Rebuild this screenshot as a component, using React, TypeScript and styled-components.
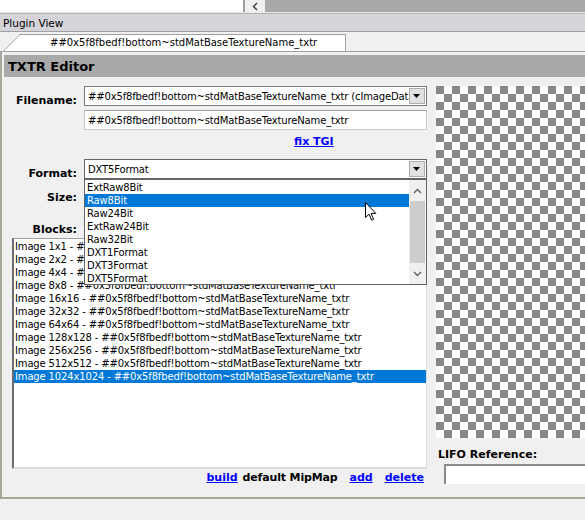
import * as React from 'react';
import styled, {createGlobalStyle} from "styled-components";

const GlobalStyle = createGlobalStyle`
  html, body {
    margin: 0;
    padding: 0;
    background: #f0f0f0;
  }
  body {
    font-family: "DejaVu Sans", Verdana, sans-serif;
    font-size: 10px;
    color: #000;
  }
`

const Window = styled.div`
  width: 585px;
  height: 520px;
  overflow: hidden;
  display: flex;
  flex-direction: column;
  background: #f0f0f0;
`

const TopStrip = styled.div`
  display: flex;
  height: 12px;
  border-bottom: 1px solid #e8e8e8;
`

const TopWhite = styled.div`
  width: 243px;
  background: #fff;
  border-right: 2px solid #a0a0a0;
`

const ScrollLeft = styled.div`
  width: 20px;
  display: flex;
  align-items: center;
  justify-content: center;
  background: #f0f0f0;
`

const TopDark = styled.div`
  flex: 1;
  background: #a9a9a9;
`

const PluginBar = styled.div`
  height: 17px;
  display: flex;
  align-items: center;
  padding-left: 3px;
  background: #d4d4da;
  border-top: 1px solid #b4b4b8;
  border-bottom: 1px solid #a0a0a0;
  font-size: 10.5px;
`

const TabStrip = styled.div`
  height: 19px;
  display: flex;
  align-items: flex-end;
  padding-left: 3px;
  border-bottom: 1px solid #a0a0a0;
`

const Tab = styled.div`
  position: relative;
  width: 343px;
  height: 17px;
  display: flex;
  align-items: center;
  padding-left: 47px;
  box-sizing: border-box;

  &::before {
    content: "";
    position: absolute;
    left: 0;
    top: 0;
    bottom: 0;
    width: 30px;
    background: #fff;
    border-left: 1px solid #a0a0a0;
    border-top: 1px solid #a0a0a0;
    transform-origin: bottom left;
    transform: skewX(-45deg);
  }

  &::after {
    content: "";
    position: absolute;
    left: 20px;
    right: 0;
    top: 0;
    bottom: 0;
    background: #fff;
    border-top: 1px solid #a0a0a0;
    border-right: 1px solid #a0a0a0;
  }
`

const TabText = styled.span`
  position: relative;
  z-index: 1;
  white-space: nowrap;
`

const Panel = styled.div`
  height: 445px;
  border-left: 2px solid #aaa69d;
  border-bottom: 2px solid #aaa69d;
  display: flex;
  flex-direction: column;
`

const Header = styled.div`
  margin: 3px 0 0 2px;
  height: 22px;
  display: flex;
  align-items: center;
  padding-left: 4px;
  background: #a9a9a9;
  font-weight: bold;
  font-size: 13px;
`

const Body = styled.div`
  margin-top: 9px;
  display: grid;
  grid-template-columns: 434px 1fr;
  position: relative;
`

const LeftCol = styled.div`
  display: flex;
  flex-direction: column;
`

const FieldRow = styled.div<{ $mt?: number; $h?: number }>`
  display: grid;
  grid-template-columns: 75px 343px;
  column-gap: 7px;
  margin-top: ${p => p.$mt ?? 0}px;
  height: ${p => p.$h ?? 20}px;
  align-items: end;
`

const Label = styled.div`
  text-align: right;
  font-weight: bold;
  font-size: 11px;
  line-height: 13px;
  margin-bottom: -1px;
`

const Select = styled.div<{ $focus?: boolean }>`
  height: 20px;
  box-sizing: border-box;
  border: 1px solid ${p => p.$focus ? '#646464' : '#7a7a7a'};
  box-shadow: inset 0 0 0 1px #fff;
  background: #fff;
  display: flex;
  align-items: center;
`

const SelectText = styled.span`
  flex: 1;
  padding-left: 3px;
  line-height: 15px;
  white-space: nowrap;
  overflow: hidden;
  letter-spacing: -0.15px;
`

const DropButton = styled.div`
  width: 16px;
  height: 16px;
  margin-right: 1px;
  background: #e1e1e1;
  border: 1px solid #adadad;
  box-sizing: border-box;
  display: flex;
  align-items: center;
  justify-content: center;
`

const TextInput = styled.div`
  height: 20px;
  box-sizing: border-box;
  border: 1px solid #c8c8c8;
  border-top-color: #a0a0a0;
  background: #fff;
  display: flex;
  align-items: center;
  padding-left: 3px;
  white-space: nowrap;
  letter-spacing: -0.15px;
`

const LinkLine = styled.div<{ $mt?: number }>`
  margin-top: ${p => p.$mt ?? 0}px;
  display: flex;
  align-items: center;
`

const BlueLink = styled.a`
  color: #0000ff;
  font-weight: bold;
  font-size: 11px;
  text-decoration: underline;
  cursor: pointer;
`

const FixRow = styled(LinkLine)`
  padding-left: 292px;
  height: 14px;
`

const DropList = styled.div`
  position: absolute;
  left: 82px;
  top: 93px;
  width: 343px;
  height: 106px;
  box-sizing: border-box;
  border: 1px solid #646464;
  background: #fff;
  display: flex;
  z-index: 2;
`

const DropItems = styled.div`
  flex: 1;
  padding-top: 1px;
`

const DropItem = styled.div<{ $sel?: boolean }>`
  height: 13px;
  line-height: 13px;
  padding-left: 2px;
  letter-spacing: -0.15px;
  background: ${p => p.$sel ? '#0078d7' : 'transparent'};
  color: ${p => p.$sel ? '#fff' : '#000'};
`

const ScrollBar = styled.div`
  width: 17px;
  background: #f0f0f0;
  display: flex;
  flex-direction: column;
  align-items: center;
`

const ScrollArrow = styled.div`
  height: 24px;
  width: 17px;
  display: flex;
  align-items: center;
  justify-content: center;
`

const ScrollTrack = styled.div`
  flex: 1;
  width: 15px;
`

const ScrollThumb = styled.div`
  height: 62px;
  background: #cdcdcd;
`

const BlockList = styled.div`
  margin: 3px 0 0 10px;
  width: 415px;
  height: 231px;
  box-sizing: border-box;
  background: #fff;
  border-left: 2px solid #6d6d6d;
  border-top: 1px solid #a0a0a0;
  border-right: 1px solid #dcdcdc;
  border-bottom: 2px solid #dcdcdc;
  padding-top: 1px;
`

const BlockItem = styled.div<{ $sel?: boolean }>`
  height: 13px;
  line-height: 13px;
  padding-left: 1px;
  white-space: nowrap;
  letter-spacing: -0.15px;
  background: ${p => p.$sel ? '#0078d7' : 'transparent'};
  color: ${p => p.$sel ? '#fff' : '#000'};
`

const ActionRow = styled.div`
  width: 422px;
  height: 17px;
  display: flex;
  justify-content: flex-end;
  align-items: center;
  gap: 12px;
`

const PlainBold = styled.span`
  font-weight: bold;
  font-size: 11px;
  letter-spacing: -0.15px;
  margin-left: 5px;
`

const RightCol = styled.div`
  display: flex;
  flex-direction: column;
`

const Checker = styled.div`
  height: 352px;
  background: repeating-conic-gradient(#fff 0 25%, #878787 0 50%) 0 0 / 16px 16px;
`

const LifoLabel = styled.div`
  margin: 10px 0 0 2px;
  font-weight: bold;
  font-size: 11px;
`

const LifoInput = styled.div`
  margin: 3px 0 0 8px;
  height: 20px;
  box-sizing: border-box;
  background: #fff;
  border-top: 2px solid #8a8a8a;
  border-left: 2px solid #8a8a8a;
`

const Cursor = styled.svg`
  position: absolute;
  left: 363px;
  top: 116px;
  z-index: 3;
`

const BottomSpace = styled.div`
  flex: 1;
`

const name = '##0x5f8fbedf!bottom~stdMatBaseTextureName_txtr';
const formats = ['ExtRaw8Bit', 'Raw8Bit', 'Raw24Bit', 'ExtRaw24Bit', 'Raw32Bit', 'DXT1Format', 'DXT3Format', 'DXT5Format'];
const sizes = [1, 2, 4, 8, 16, 32, 64, 128, 256, 512, 1024];

const Triangle = () => (
    <svg width="8" height="4" viewBox="0 0 8 4"><path d="M0 0 H7 L3.5 4 Z" fill="#000"/></svg>
);

const Chevron = ({up}: { up?: boolean }) => (
    <svg width="9" height="6" viewBox="0 0 9 6">
        <path d={up ? "M1 5 L4.5 1.5 L8 5" : "M1 1 L4.5 4.5 L8 1"} fill="none" stroke="#606060" strokeWidth="1.4"/>
    </svg>
);

export default function App() {
    return (
        <Window>
            <GlobalStyle/>
            <TopStrip>
                <TopWhite/>
                <ScrollLeft>
                    <svg width="6" height="9" viewBox="0 0 6 9">
                        <path d="M5 1 L1.5 4.5 L5 8" fill="none" stroke="#404040" strokeWidth="1.5"/>
                    </svg>
                </ScrollLeft>
                <TopDark/>
            </TopStrip>
            <PluginBar>Plugin View</PluginBar>
            <TabStrip>
                <Tab><TabText>{name}</TabText></Tab>
            </TabStrip>
            <Panel>
                <Header>TXTR Editor</Header>
                <Body>
                    <LeftCol>
                        <FieldRow>
                            <Label>Filename:</Label>
                            <Select>
                                <SelectText>{name} (cImageData)</SelectText>
                                <DropButton><Triangle/></DropButton>
                            </Select>
                        </FieldRow>
                        <FieldRow $mt={4}>
                            <div/>
                            <TextInput>{name}</TextInput>
                        </FieldRow>
                        <FixRow $mt={4}>
                            <BlueLink>fix TGI</BlueLink>
                        </FixRow>
                        <FieldRow $mt={11}>
                            <Label>Format:</Label>
                            <Select $focus>
                                <SelectText>DXT5Format</SelectText>
                                <DropButton><Triangle/></DropButton>
                            </Select>
                        </FieldRow>
                        <FieldRow $mt={4}>
                            <Label>Size:</Label>
                            <div/>
                        </FieldRow>
                        <FieldRow $mt={18} $h={14}>
                            <Label>Blocks:</Label>
                            <div/>
                        </FieldRow>
                        <BlockList>
                            {sizes.map(s => (
                                <BlockItem key={s} $sel={s === 1024}>
                                    Image {s}x{s} - {name}
                                </BlockItem>
                            ))}
                        </BlockList>
                        <ActionRow>
                            <span>
                                <BlueLink>build</BlueLink>
                                <PlainBold>default MipMap</PlainBold>
                            </span>
                            <BlueLink>add</BlueLink>
                            <BlueLink>delete</BlueLink>
                        </ActionRow>
                    </LeftCol>
                    <RightCol>
                        <Checker/>
                        <LifoLabel>LIFO Reference:</LifoLabel>
                        <LifoInput/>
                    </RightCol>

                    <DropList>
                        <DropItems>
                            {formats.map(f => (
                                <DropItem key={f} $sel={f === 'Raw8Bit'}>{f}</DropItem>
                            ))}
                        </DropItems>
                        <ScrollBar>
                            <ScrollArrow><Chevron up/></ScrollArrow>
                            <ScrollTrack><ScrollThumb/></ScrollTrack>
                            <ScrollArrow><Chevron/></ScrollArrow>
                        </ScrollBar>
                    </DropList>
                    <Cursor width="12" height="19" viewBox="0 0 12 19">
                        <path d="M0.5 0.5 L0.5 15.5 L4 12.2 L6.6 18.2 L8.6 17.3 L6.1 11.4 L10.8 11.4 Z"
                              fill="#fff" stroke="#000" strokeWidth="1"/>
                    </Cursor>
                </Body>
                <BottomSpace/>
            </Panel>
        </Window>
    );
}
